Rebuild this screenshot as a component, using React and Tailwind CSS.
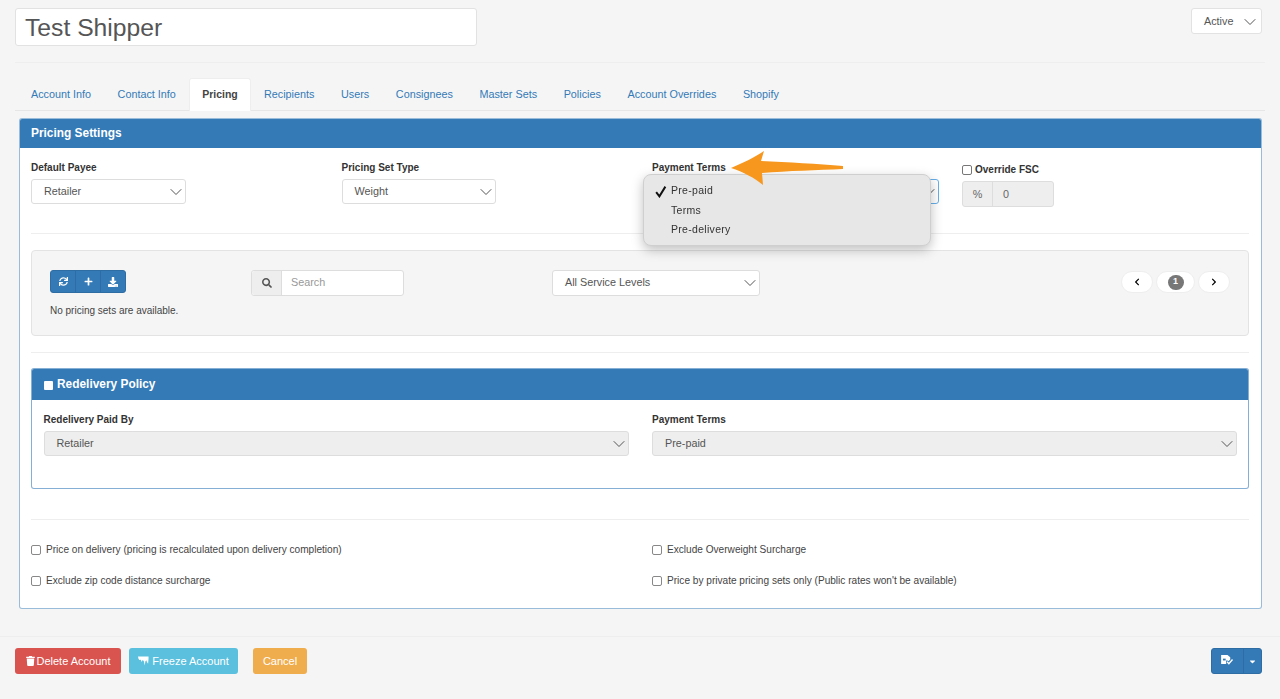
import { ChevronDown } from 'lucide-react';
import { FaSync, FaPlus, FaDownload, FaSearch, FaTrash, FaChevronLeft, FaChevronRight, FaCaretDown } from 'react-icons/fa';

const TABS = ['Account Info', 'Contact Info', 'Pricing', 'Recipients', 'Users', 'Consignees', 'Master Sets', 'Policies', 'Account Overrides', 'Shopify'];

function SelectBox({ value, className = '', disabled = false, focused = false }) {
  return (
    <div className={`h-[25px] flex items-center justify-between pl-[12px] rounded-[3px] border text-[10.8px] text-[#555] ${focused ? 'border-[#66afe9]' : 'border-[#ddd]'} ${disabled ? 'bg-[#eeeeee]' : 'bg-white'} ${className}`}>
      <span>{value}</span>
      <ChevronDown className="w-[20px] h-[20px] -mr-[1px] text-[#555]" strokeWidth={1.2} />
    </div>
  );
}

function Check({ label }) {
  return (
    <label className="flex items-center gap-[5px] text-[10.1px] leading-[12px] text-[#444]">
      <span className="w-[10px] h-[10px] rounded-[2px] border border-[#888] bg-white" />
      {label}
    </label>
  );
}

function FieldLabel({ children }) {
  return <div className="text-[10px] font-bold text-[#333] leading-[12px] mb-[5px]">{children}</div>;
}

function Divider({ className = '' }) {
  return <div className={`h-px bg-[#eeeeee] ${className}`} />;
}

export default function App() {
  return (
    <div className="w-[1280px] h-[699px] overflow-hidden bg-[#f5f5f5] font-['Liberation_Sans',sans-serif]">
      <div className="flex justify-between items-start pt-[8px] pl-[15px] pr-[18px]">
        <input
          readOnly
          value="Test Shipper"
          className="w-[462px] h-[38px] px-[9px] pt-[2px] bg-white rounded-[3px] border border-[#e2e2e2] text-[24.7px] text-[#555] outline-none"
        />
        <div className="w-[71px] h-[26px] flex items-center justify-between pt-px pl-[12px] pr-[1px] bg-white rounded-[3px] border border-[#e2e2e2] text-[10.8px] text-[#555]">
          Active
          <ChevronDown className="w-[20px] h-[20px] text-[#555]" strokeWidth={1.2} />
        </div>
      </div>

      <Divider className="mt-[16px] mx-[15px]" />

      {/* tabs */}
      <div className="mt-[15px] mx-[15px] h-[33px] flex items-end border-b border-[#e6e6e6] pl-[2.700px]">
        {TABS.map((t) =>
          t === 'Pricing' ? (
            <div key={t} className="h-[33px] -mb-px px-[12px] flex items-center bg-white border border-b-0 border-[#eeeeee] rounded-t-[3px] text-[10.500px] font-bold text-[#444]">
              {t}
            </div>
          ) : (
            <div key={t} className="h-[32px] px-[13.300px] flex items-center text-[10.800px] text-[#337ab7]">
              {t}
            </div>
          )
        )}
      </div>

      {/* pricing panel */}
      <div className="mt-[7px] mx-[19px] w-[1243px] h-[491px] bg-white rounded-[3px] border border-[#337ab7]/50 overflow-hidden">
        <div className="h-[30px] -mt-px pt-[2px] flex items-center px-[11px] bg-[#337ab7] text-white text-[11.900px] font-bold">Pricing Settings</div>

        <div className="pl-[11px] pr-[12px]">
          <div className="grid grid-cols-[310.500px_310.500px_310px_1fr] pt-[14px] h-[85px]">
            <div>
              <FieldLabel>Default Payee</FieldLabel>
              <SelectBox value="Retailer" className="w-[155px]" />
            </div>
            <div>
              <FieldLabel>Pricing Set Type</FieldLabel>
              <SelectBox value="Weight" className="w-[154px]" />
            </div>
            <div>
              <FieldLabel>Payment Terms</FieldLabel>
              <SelectBox value="" focused className="w-[287px]" />
            </div>
            <div className="pt-[2px]">
              <div className="flex items-center gap-[3px] text-[10px] font-bold text-[#333] leading-[12px] mb-[5px]">
                <span className="w-[10px] h-[10px] rounded-[2px] border border-[#777] bg-white" />
                Override FSC
              </div>
              <div className="w-[92px] h-[26px] flex rounded-[3px] border border-[#dddddd] bg-[#eeeeee] text-[10.8px] text-[#666]">
                <span className="w-[30px] flex items-center justify-center border-r border-[#dddddd]">%</span>
                <span className="pl-[10px] flex items-center">0</span>
              </div>
            </div>
          </div>

          <Divider />

          {/* pricing sets well */}
          <div className="mt-[16px] h-[86px] rounded-[4px] border border-[#e3e3e3] bg-[#f5f5f5] pt-[19px] pl-[18px] pr-[18px] flex items-start">
            <div className="w-[201px]">
              <div className="w-[76px] h-[23px] flex rounded-[3px] bg-[#337ab7] border border-[#2e6da4] text-white">
                <span className="flex-1 flex items-center justify-center"><FaSync className="w-[9px] h-[9px]" /></span>
                <span className="flex-1 flex items-center justify-center border-l border-[#2e6da4]"><FaPlus className="w-[9px] h-[9px]" /></span>
                <span className="flex-1 flex items-center justify-center border-l border-[#2e6da4]"><FaDownload className="w-[10px] h-[10px]" /></span>
              </div>
              <div className="mt-[12px] text-[10px] leading-[12px] text-[#444]">No pricing sets are available.</div>
            </div>
            <div className="w-[153px] h-[26px] flex rounded-[3px] border border-[#dddddd] bg-white text-[10.8px]">
              <span className="w-[30px] flex items-center justify-center bg-[#eeeeee] border-r border-[#dddddd] rounded-l-[3px] text-[#555]">
                <FaSearch className="w-[10px] h-[10px]" />
              </span>
              <span className="pl-[9px] pb-px flex items-center text-[#999]">Search</span>
            </div>
            <SelectBox value="All Service Levels" className="ml-[148px] w-[208px] h-[26px] pb-px" />
            <div className="ml-auto mt-px flex gap-[3px]">
              <span className="w-[32px] h-[22px] flex items-center justify-center rounded-full bg-white border border-[#eeeeee] text-black">
                <FaChevronLeft className="w-[8px] h-[8px]" />
              </span>
              <span className="w-[39px] h-[22px] flex items-center justify-center rounded-full bg-white border border-[#eeeeee]">
                <span className="w-[16px] h-[15px] flex items-center justify-center rounded-full bg-[#777] text-white text-[9px] font-bold">1</span>
              </span>
              <span className="w-[32px] h-[22px] flex items-center justify-center rounded-full bg-white border border-[#eeeeee] text-black">
                <FaChevronRight className="w-[8px] h-[8px]" />
              </span>
            </div>
          </div>

          <Divider className="mt-[16px]" />

          {/* redelivery */}
          <div className="mt-[15px] h-[121px] rounded-[3px] border border-[#337ab7]/60 bg-white overflow-hidden">
            <div className="h-[32px] -mt-px pt-[2px] flex items-center gap-[4px] pl-[12px] bg-[#337ab7] text-white text-[11.900px] font-bold">
              <span className="w-[9px] h-[9px] rounded-[1px] bg-white" />
              Redelivery Policy
            </div>
            <div className="grid grid-cols-[608.500px_1fr] pt-[14px] pl-[11.500px] pr-[11px]">
              <div>
                <FieldLabel>Redelivery Paid By</FieldLabel>
                <SelectBox value="Retailer" disabled className="w-[585px]" />
              </div>
              <div>
                <FieldLabel>Payment Terms</FieldLabel>
                <SelectBox value="Pre-paid" disabled className="w-full" />
              </div>
            </div>
          </div>

          <Divider className="mt-[30px]" />

          <div className="mt-[24px] grid grid-cols-[621px_1fr] gap-y-[19px]">
            <Check label="Price on delivery (pricing is recalculated upon delivery completion)" />
            <Check label="Exclude Overweight Surcharge" />
            <Check label="Exclude zip code distance surcharge" />
            <Check label="Price by private pricing sets only (Public rates won't be available)" />
          </div>
        </div>
      </div>

      <Divider className="mt-[27px]" />

      {/* footer */}
      <div className="mt-[11px] pl-[15px] pr-[18px] flex items-center text-[11px] text-white">
        <div className="h-[26px] w-[106px] flex items-center justify-center gap-[2px] rounded-[3px] bg-[#d9534f]">
          <FaTrash className="w-[9px] h-[10px]" />
          Delete Account
        </div>
        <div className="ml-[8px] h-[26px] w-[109px] flex items-center justify-center gap-[3px] rounded-[3px] bg-[#5bc0de]">
          <svg viewBox="0 0 12 10" className="w-[11px] h-[10px]" fill="currentColor">
            <path d="M0 0h11.500v2.500L11 8 9.800 6 9 4.200 8 5.500 7.400 10 6.300 5 5 4 4 6 3 3.500 1.500 4 .5 2.500z" />
          </svg>
          Freeze Account
        </div>
        <div className="ml-[15px] h-[26px] w-[54px] flex items-center justify-center rounded-[3px] bg-[#f0ad4e]">Cancel</div>
        <div className="ml-auto h-[26px] w-[51px] flex rounded-[3px] bg-[#337ab7] border border-[#2e6da4]">
          <span className="w-[31px] flex items-center justify-center pb-[3px]">
            <svg viewBox="0 0 14 11" className="w-[13px] h-[10px]" fill="none">
              <path d="M0 0h7l3 2.500V5L8 7 7 6H5.500V10H0z" fill="#fff" />
              <path d="M2 4h3v2H2z" fill="#337ab7" />
              <path d="M6.500 7.500l2 2 4-4.500" stroke="#fff" strokeWidth="1.500" />
            </svg>
          </span>
          <span className="flex-1 flex items-center justify-center border-l border-[#2e6da4]">
            <FaCaretDown className="w-[9px] h-[9px]" />
          </span>
        </div>
      </div>

      {/* native select popup, over the Payment Terms field */}
      <div className="fixed left-[643px] top-[174px] w-[288px] h-[72px] pt-[6.500px] rounded-[8px] border border-[#cfcfcf] bg-[#e6e7e6] shadow-[0_4px_12px_rgba(0,0,0,0.25)] text-[10.500px] tracking-[0.3px] text-[#333]">
        <div className="h-[19.500px] flex items-center pl-[27px] relative">
          <svg viewBox="0 0 12 12" className="absolute left-[10px] top-[3px] w-[13px] h-[13px]" fill="none" stroke="#111" strokeWidth="1.800">
            <path d="M2 6.500L5 10.500 10.500 1.500" />
          </svg>
          Pre-paid
        </div>
        <div className="h-[19.500px] flex items-center pl-[27px]">Terms</div>
        <div className="h-[19.500px] flex items-center pl-[27px]">Pre-delivery</div>
      </div>

      {/* orange annotation arrow */}
      <svg viewBox="0 0 120 40" className="fixed left-[728px] top-[150px] w-[120px] h-[40px]">
        <path d="M3 18 C15 13 27 7 36 1 L33 11 C60 12 90 14 115 16 L115 19 C90 20 60 21 34 23 L35 35 C27 28 15 22 3 18 Z" fill="#f7971e" />
      </svg>
    </div>
  );
}
